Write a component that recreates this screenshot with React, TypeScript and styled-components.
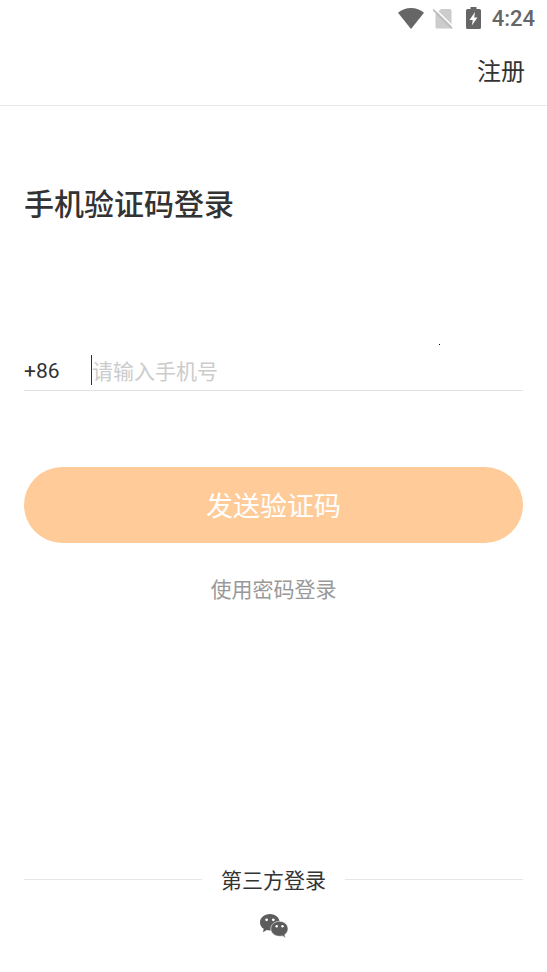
import React, { useState } from "react";
import styled, { createGlobalStyle } from "styled-components";

const GlobalStyle = createGlobalStyle`
  *, *::before, *::after { box-sizing: border-box; }
  body { margin: 0; background: #fff; }
  button, input { font: inherit; }
`;

const Screen = styled.div`
  display: flex;
  flex-direction: column;
  min-height: 100vh;
  background: #fff;
  color: #333;
  font-family: Roboto, "Noto Sans CJK SC", sans-serif;
  font-size: 21px;
  line-height: 32px;
`;

const StatusBar = styled.div`
  display: flex;
  align-items: center;
  justify-content: flex-end;
  height: 36px;
  padding: 0 12px;
  color: #666;
`;

const StatusIcon = styled.svg<{ $gap: number }>`
  display: block;
  flex: none;
  margin-right: ${(p) => p.$gap}px;
`;

const Clock = styled.time`
  padding-top: 2px;
  font-weight: 500;
  font-size: 22px;
`;

const Header = styled.header`
  display: flex;
  align-items: center;
  justify-content: flex-end;
  height: 70px;
  padding: 2px 22px 0;
  border-bottom: 1px solid #e6e6e6;
`;

const RegisterLink = styled.a`
  color: #333;
  font-size: 24px;
  text-decoration: none;
`;

const Main = styled.main`
  display: flex;
  flex: 1;
  flex-direction: column;
  padding: 77px 24px 0;
`;

const Title = styled.h1`
  margin: 0 0 123px;
  font-size: 30px;
  font-weight: 500;
  line-height: 44px;
`;

const Form = styled.form`
  display: flex;
  flex-direction: column;
`;

const PhoneField = styled.label`
  position: relative;
  display: flex;
  align-items: center;
  height: 41px;
  margin-bottom: 76px;
  border-bottom: 1px solid #e2e2e2;
`;

const CountryCode = styled.span`
  width: 67px;
  padding-top: 2px;
`;

const Caret = styled.span`
  width: 1px;
  height: 30px;
  background: #333;
`;

const PhoneInput = styled.input`
  flex: 1;
  min-width: 0;
  height: 36px;
  padding: 4px 0 0;
  border: 0;
  outline: 0;
  background: transparent;
  color: #333;
  &::placeholder { color: #ccc; opacity: 1; }
`;

const Pointer = styled.span`
  position: absolute;
  top: -6px;
  right: 83px;
  width: 1px;
  height: 1px;
  background: #000;
`;

const SendButton = styled.button`
  height: 76px;
  padding: 4px 0 0;
  border: 0;
  border-radius: 38px;
  background: #ffcc99;
  color: #fff;
  font-size: 27px;
`;

const PasswordLink = styled.a`
  align-self: center;
  margin-top: 31px;
  color: #999;
  text-decoration: none;
`;

const Footer = styled.footer`
  display: flex;
  flex-direction: column;
  align-items: center;
  gap: 17px;
  padding: 0 24px 34px;
`;

const Divider = styled.div`
  display: flex;
  align-items: center;
  align-self: stretch;
  gap: 19px;
  &::before, &::after {
    content: "";
    flex: 1;
    height: 1px;
    margin-bottom: 4px;
    background: #e6e6e6;
  }
`;

const WeChatButton = styled.button`
  display: block;
  padding: 0;
  border: 0;
  background: none;
  color: #5c5c5c;
  svg { display: block; }
`;

export default function App() {
  const [phone, setPhone] = useState("");

  return (
    <Screen>
      <GlobalStyle />
      <StatusBar>
        <StatusIcon $gap={9} width="26" height="21" viewBox="0 0 26 21" aria-label="Wi-Fi">
          <path d="M0 4.800C7-1.600 19-1.600 26 4.800L13 21Z" fill="currentColor" />
        </StatusIcon>
        <StatusIcon $gap={13} width="20" height="21" viewBox="0 0 20 21" aria-label="No SIM">
          <path d="M8 1h9a1.500 1.500 0 0 1 1.500 1.500V19a1.500 1.500 0 0 1-1.500 1.500h-13A1.500 1.500 0 0 1 2.500 19V6Z" fill="#ccc" />
          <path d="M1 0 21 19.500" stroke="#fff" strokeWidth="1.500" />
          <path d="M0 1.500 19 20.500" stroke="#bbb" strokeWidth="1.700" />
        </StatusIcon>
        <StatusIcon $gap={11} width="15" height="22" viewBox="0 0 15 22" aria-label="Battery charging">
          <path d="M4.500 0h6v2H13.500A1.500 1.500 0 0 1 15 3.500v17a1.500 1.500 0 0 1-1.500 1.500h-12A1.500 1.500 0 0 1 0 20.500v-17A1.500 1.500 0 0 1 1.500 2h3Z" fill="currentColor" />
          <path d="M9 5 3.500 13h3.300L5.800 18.500 11.500 10.500H8.200Z" fill="#fff" />
        </StatusIcon>
        <Clock>4:24</Clock>
      </StatusBar>
      <Header>
        <RegisterLink href="#register">注册</RegisterLink>
      </Header>
      <Main>
        <Title>手机验证码登录</Title>
        <Form onSubmit={(e) => e.preventDefault()}>
          <PhoneField>
            <CountryCode>+86</CountryCode>
            <Caret />
            <PhoneInput
              type="tel"
              aria-label="手机号"
              placeholder="请输入手机号"
              value={phone}
              onChange={(e) => setPhone(e.target.value)}
            />
            <Pointer />
          </PhoneField>
          <SendButton type="submit">发送验证码</SendButton>
        </Form>
        <PasswordLink href="#password">使用密码登录</PasswordLink>
      </Main>
      <Footer>
        <Divider>第三方登录</Divider>
        <WeChatButton type="button" aria-label="微信登录">
          <svg width="28" height="24" viewBox="0 0 28 24">
            <path d="M10 0C4.300 0 0 3.700 0 8.400c0 2.600 1.400 4.900 3.700 6.400L3 18.300l3.800-2.200c1 .3 2.100.4 3.200.4 5.700 0 9.700-3.600 9.700-8.100S15.500 0 10 0Z" fill="currentColor" />
            <path d="M19.500 7.300c-5 0-8.700 3.300-8.700 7.500s3.700 7.500 8.700 7.500c1 0 1.900-.1 2.800-.4l3.200 2-.8-3.200c2-1.300 3.300-3.400 3.300-5.900 0-4.200-3.900-7.500-8.500-7.500Z" fill="currentColor" stroke="#fff" strokeWidth=".6" />
            <circle cx="6.600" cy="5.800" r="1.400" fill="#fff" />
            <circle cx="13.300" cy="5.800" r="1.400" fill="#fff" />
            <circle cx="16.700" cy="12.300" r="1.200" fill="#fff" />
            <circle cx="22.500" cy="12.300" r="1.200" fill="#fff" />
          </svg>
        </WeChatButton>
      </Footer>
    </Screen>
  );
}
